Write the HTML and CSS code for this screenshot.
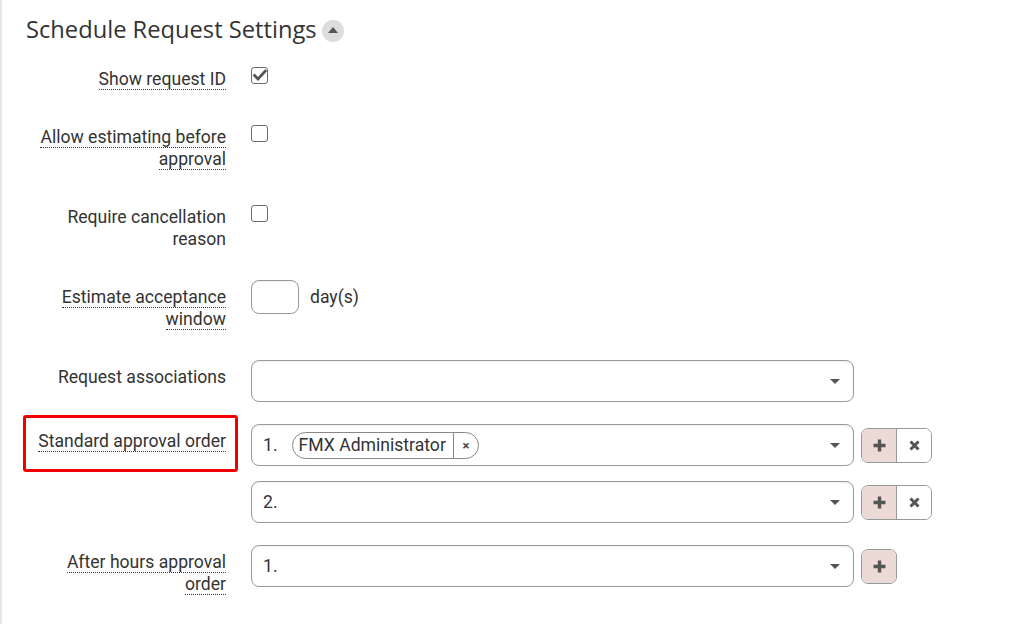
FILE: index.html
```html
<!DOCTYPE html>
<html>
<head>
<meta charset="utf-8">
<link rel="stylesheet" href="styles.css">
</head>
<body>
<div class="panel">
  <h2 class="title">Schedule Request Settings <span class="toggle"><svg width="10" height="6" viewBox="0 0 10 6"><path d="M0 6 L5 0 L10 6 Z" fill="#555"/></svg></span></h2>

  <div class="row">
    <div class="lbl"><span class="u">Show request ID</span></div>
    <div class="ctl">
      <span class="cb checked"><svg width="17" height="17" viewBox="0 0 17 17"><path d="M3.6 8.6 L7 12 L14.2 4.2" fill="none" stroke="#555" stroke-width="2.8" stroke-linecap="square"/></svg></span>
    </div>
  </div>

  <div class="row">
    <div class="lbl"><span class="u">Allow estimating before</span><br><span class="u">approval</span></div>
    <div class="ctl"><span class="cb"></span></div>
  </div>

  <div class="row">
    <div class="lbl">Require cancellation<br>reason</div>
    <div class="ctl"><span class="cb"></span></div>
  </div>

  <div class="row">
    <div class="lbl"><span class="u">Estimate acceptance</span><br><span class="u">window</span></div>
    <div class="ctl inline"><span class="num"></span><span class="unit">day(s)</span></div>
  </div>

  <div class="row">
    <div class="lbl">Request associations</div>
    <div class="ctl">
      <div class="sel"><span class="caret"></span></div>
    </div>
  </div>

  <div class="row">
    <div class="lbl marked"><span class="u">Standard approval order</span><span class="redbox"></span></div>
    <div class="ctl stack">
      <div class="line">
        <div class="sel"><span class="idx">1.</span><span class="tag"><span class="tag-text">FMX Administrator</span><span class="tag-x">×</span></span><span class="caret"></span></div>
        <div class="btns">
          <span class="btn add"><svg width="13" height="13" viewBox="0 0 13 13"><path d="M6.5 0.5 V12.5 M0.5 6.5 H12.5" stroke="#555" stroke-width="3.4"/></svg></span>
          <span class="btn rm"><svg width="11" height="11" viewBox="0 0 11 11"><path d="M1.5 1.5 L9.5 9.5 M9.5 1.5 L1.5 9.5" stroke="#555" stroke-width="3"/></svg></span>
        </div>
      </div>
      <div class="line">
        <div class="sel"><span class="idx">2.</span><span class="caret"></span></div>
        <div class="btns">
          <span class="btn add"><svg width="13" height="13" viewBox="0 0 13 13"><path d="M6.5 0.5 V12.5 M0.5 6.5 H12.5" stroke="#555" stroke-width="3.4"/></svg></span>
          <span class="btn rm"><svg width="11" height="11" viewBox="0 0 11 11"><path d="M1.5 1.5 L9.5 9.5 M9.5 1.5 L1.5 9.5" stroke="#555" stroke-width="3"/></svg></span>
        </div>
      </div>
    </div>
  </div>

  <div class="row">
    <div class="lbl"><span class="u">After hours approval</span><br><span class="u">order</span></div>
    <div class="ctl stack">
      <div class="line">
        <div class="sel"><span class="idx">1.</span><span class="caret"></span></div>
        <div class="btns">
          <span class="btn add"><svg width="13" height="13" viewBox="0 0 13 13"><path d="M6.5 0.5 V12.5 M0.5 6.5 H12.5" stroke="#555" stroke-width="3.4"/></svg></span>
        </div>
      </div>
    </div>
  </div>
</div>
</body>
</html>
```

FILE: styles.css
```css
html, body {
  margin: 0;
  background: #fff;
}
body {
  font-family: Roboto, "Liberation Sans", sans-serif;
  color: #333;
  font-size: 17.6px;
}
.panel {
  border-left: 2px solid #e6e6e6;
  padding: 14px 0 0 24px;
  min-height: 624px;
  box-sizing: border-box;
}
.title {
  margin: 0 0 18px;
  font: 400 23.7px/30px "Open Sans", sans-serif;
  color: #333;
  display: flex;
  align-items: center;
  gap: 5px;
}
.toggle {
  width: 22px;
  height: 22px;
  border-radius: 50%;
  background: #ddd;
  display: flex;
  align-items: center;
  justify-content: center;
  margin-top: 4px;
}
.toggle svg {
  margin-top: -2px;
}
.row {
  display: grid;
  grid-template-columns: 200px auto;
  column-gap: 25px;
  align-items: start;
  margin-bottom: 22px;
}
.lbl {
  text-align: right;
  font-size: 17.6px;
  line-height: 22px;
  padding: 6px 0 8px;
}
.u {
  border-bottom: 1px dotted #333;
}
.marked {
  position: relative;
}
.redbox {
  position: absolute;
  top: -9px;
  bottom: -12px;
  left: -3px;
  right: -12px;
  border: 3px solid #f20000;
  border-radius: 3px;
}
.ctl {
  display: flex;
}
.ctl.stack {
  flex-direction: column;
  gap: 15px;
}
.ctl.inline {
  align-items: center;
}
.cb {
  width: 17px;
  height: 17px;
  border: 1px solid #6b6b6b;
  border-radius: 3px;
  box-sizing: border-box;
  margin-top: 5px;
  position: relative;
  background: #fff;
}
.cb svg {
  position: absolute;
  left: -1px;
  top: -1px;
}
.num {
  width: 48px;
  height: 34px;
  border: 1px solid #999;
  border-radius: 8px;
  box-sizing: border-box;
  box-shadow: inset 0 1px 2px rgba(0,0,0,0.06);
}
.unit {
  margin-left: 11px;
  line-height: 22px;
}
.line {
  display: flex;
  align-items: center;
  gap: 7px;
}
.sel {
  width: 603px;
  height: 42px;
  border: 1px solid #9a9a9a;
  border-radius: 8px;
  box-sizing: border-box;
  display: flex;
  align-items: center;
  padding: 0 13px 0 11px;
  box-shadow: inset 0 1px 2px rgba(0,0,0,0.07);
}
.idx {
  line-height: 22px;
}
.caret {
  margin-left: auto;
  width: 0;
  height: 0;
  border-left: 5px solid transparent;
  border-right: 5px solid transparent;
  border-top: 5px solid #555;
}
.tag {
  display: inline-flex;
  align-items: stretch;
  height: 27px;
  box-sizing: border-box;
  border: 1px solid #888;
  border-radius: 14px;
  margin-left: 14px;
  overflow: hidden;
}
.tag-text {
  padding: 0 7px 0 6px;
  line-height: 25px;
}
.tag-x {
  width: 24px;
  border-left: 1px solid #888;
  display: flex;
  align-items: center;
  justify-content: center;
  font-size: 13px;
  font-weight: 700;
  color: #444;
}
.btns {
  display: flex;
  height: 35px;
  border: 1px solid #999;
  border-radius: 7px;
  overflow: hidden;
  box-sizing: border-box;
}
.btn {
  width: 34px;
  display: flex;
  align-items: center;
  justify-content: center;
}
.btn.add {
  background: #ecdad7;
}
.btn.rm {
  background: #fff;
  border-left: 1px solid #999;
}
```
